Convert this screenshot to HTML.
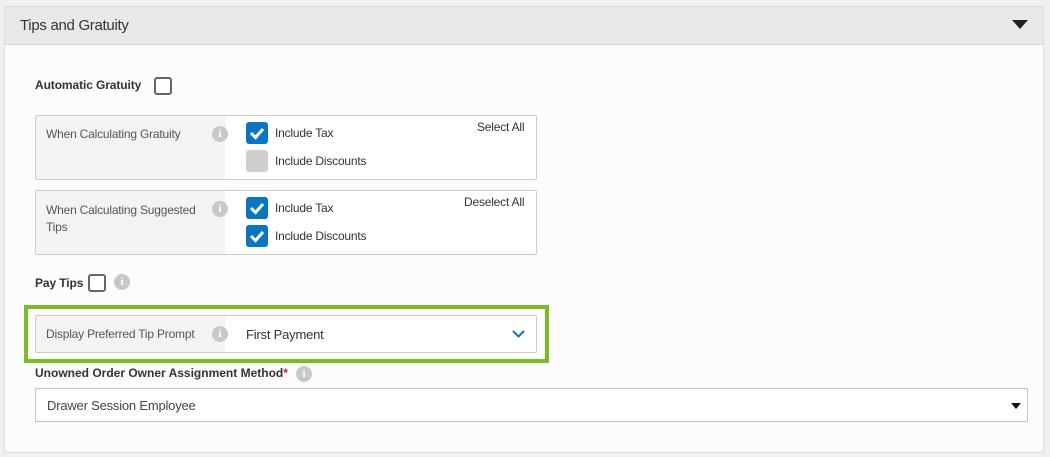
<!DOCTYPE html>
<html><head><style>
*{box-sizing:border-box;margin:0;padding:0}
body{width:1050px;height:457px;background:#f0f0f0;font-family:"Liberation Sans",sans-serif;position:relative;overflow:hidden;color:#333}
.abs{position:absolute}
.panel{left:4px;top:6px;width:1040px;height:447px;background:#fcfcfc;border:1px solid #ddd}
.hdr{left:5px;top:7px;width:1038px;height:38px;background:#e8e8e8;border-bottom:1px solid #d6d6d6}
.t{font-size:13px;white-space:nowrap}
.b{font-weight:bold;color:#333;font-size:12px;letter-spacing:-0.1px}
.cb{width:18px;height:18px;border:2px solid #666;border-radius:3px;background:#fff}
.box{left:35px;width:502px;border:1px solid #ccc;border-radius:2px;background:#fff;overflow:hidden}
.lab{position:absolute;left:0;top:0;bottom:0;width:189px;background:#f3f3f3}
.info{width:16px;height:16px;border-radius:50%;background:#c8c8c8;color:#fff;font:bold 11px "Liberation Serif",serif;text-align:center;line-height:16px}
.chk{width:22px;height:22px;border-radius:3px;background:#0a76c2}
.chk svg{display:block}
.gray{width:22px;height:22px;border-radius:3px;background:#cfcfcf}
.s{font-size:12px;letter-spacing:-0.2px}
</style></head><body>
<div class="abs panel"></div>
<div class="abs hdr"></div>
<div class="abs t" style="left:20px;top:17px;font-size:15px;color:#333;letter-spacing:-0.3px">Tips and Gratuity</div>
<svg class="abs" style="left:1012px;top:20px" width="16" height="10"><path d="M0 0H16L8 9Z" fill="#222"/></svg>

<div class="abs t b" style="left:35px;top:78px">Automatic Gratuity</div>
<div class="abs cb" style="left:154px;top:77px"></div>

<div class="abs box" style="top:115px;height:65px"><div class="lab"></div></div>
<div class="abs t s" style="left:46px;top:127px;color:#555">When Calculating Gratuity</div>
<div class="abs info" style="left:212px;top:126px">i</div>
<div class="abs chk" style="left:246px;top:122px"><svg width="22" height="22"><path d="M5 11l4.5 4.5L17 7" stroke="#fff" stroke-width="3" fill="none"/></svg></div>
<div class="abs t s" style="left:275px;top:126px">Include Tax</div>
<div class="abs gray" style="left:246px;top:150px"></div>
<div class="abs t s" style="left:275px;top:154px">Include Discounts</div>
<div class="abs t s" style="left:477px;top:120px">Select All</div>

<div class="abs box" style="top:190px;height:65px"><div class="lab"></div></div>
<div class="abs t s" style="left:46px;top:202px;color:#555;line-height:17px">When Calculating Suggested<br>Tips</div>
<div class="abs info" style="left:212px;top:201px">i</div>
<div class="abs chk" style="left:246px;top:197px"><svg width="22" height="22"><path d="M5 11l4.5 4.5L17 7" stroke="#fff" stroke-width="3" fill="none"/></svg></div>
<div class="abs t s" style="left:275px;top:201px">Include Tax</div>
<div class="abs chk" style="left:246px;top:225px"><svg width="22" height="22"><path d="M5 11l4.5 4.5L17 7" stroke="#fff" stroke-width="3" fill="none"/></svg></div>
<div class="abs t s" style="left:275px;top:229px">Include Discounts</div>
<div class="abs t s" style="left:464px;top:195px">Deselect All</div>

<div class="abs t b" style="left:35px;top:276px">Pay Tips</div>
<div class="abs cb" style="left:88px;top:274px"></div>
<div class="abs info" style="left:114px;top:274px">i</div>

<div class="abs" style="left:24px;top:305px;width:525px;height:58px;border:4px solid #7bbd23"></div>
<div class="abs box" style="top:315px;height:38px"><div class="lab"></div></div>
<div class="abs t s" style="left:46px;top:327px;color:#555">Display Preferred Tip Prompt</div>
<div class="abs info" style="left:212px;top:326px">i</div>
<div class="abs t" style="left:246px;top:327px;letter-spacing:-0.2px">First Payment</div>
<svg class="abs" style="left:512px;top:330px" width="13" height="8"><path d="M1 1l5.5 5.5L12 1" stroke="#0a76c2" stroke-width="2" fill="none"/></svg>

<div class="abs t b" style="left:35px;top:366px;letter-spacing:0px">Unowned Order Owner Assignment Method<span style="color:#e0202a">*</span></div>
<div class="abs info" style="left:296px;top:366px">i</div>
<div class="abs" style="left:35px;top:388px;width:993px;height:34px;border:1px solid #c4c4c4;background:#fff"></div>
<div class="abs t" style="left:47px;top:398px;color:#444;letter-spacing:-0.2px">Drawer Session Employee</div>
<svg class="abs" style="left:1011px;top:403px" width="10" height="6"><path d="M0 0H10L5 6Z" fill="#111"/></svg>
</body></html>
